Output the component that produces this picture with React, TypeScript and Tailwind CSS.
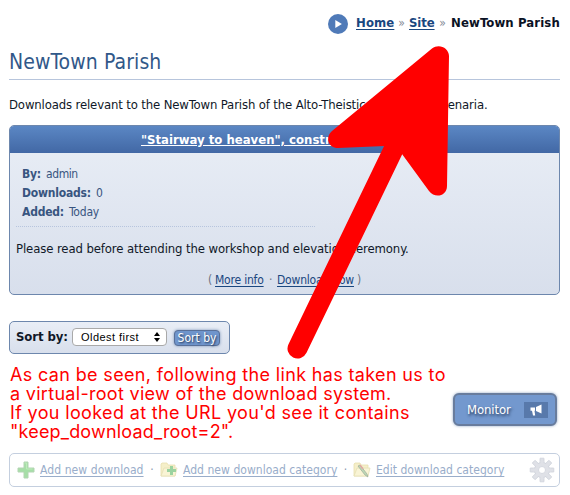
import React from "react";

const linkColor = "text-[#1a4780] underline underline-offset-2";

function Header() {
  return (
    <header className="mr-[10px] flex h-[46px] items-center justify-end text-[13px] font-bold text-[#0b1224]">
      <svg width="20" height="20" viewBox="0 0 20 20" className="mr-2 mt-[2px]">
        <circle cx="10" cy="10" r="10" fill="#4f7ab8" />
        <path d="M7.3 6v8l6.6-4z" fill="#fff" />
      </svg>
      <a className={`${linkColor} w-[38px] tracking-[0.1px]`}>Home</a>
      <span className="w-[15px] text-center text-[12px] font-normal text-[#858b98]">»</span>
      <a className={`${linkColor} w-[26px] tracking-[-0.1px]`}>Site</a>
      <span className="w-[15px] text-center text-[12px] font-normal text-[#858b98]">»</span>
      <span className="ml-px w-[109px] whitespace-nowrap tracking-[0.12px]">NewTown Parish</span>
    </header>
  );
}

function Entry() {
  return (
    <section className="h-[170px] w-[551px] overflow-hidden rounded-[5px] border border-[#6d87ad] bg-gradient-to-b from-[#e9eef6] to-[#d8dfec]">
      <h2 className="flex h-[27px] items-center bg-gradient-to-b from-[#5b87c4] to-[#4268a5] pl-[131px] text-[13px] font-bold text-white underline underline-offset-1">
        "Stairway to heaven", construction
      </h2>
      <dl className="ml-[6px] h-[74px] w-[299px] border-b border-dotted border-[#b7c5de] pl-[6px] pt-[12px] text-[12px] leading-[19px] tracking-[-0.2px] text-[#385580]">
        <div className="flex gap-[5px]"><dt className="font-bold">By:</dt><dd className="tracking-[-0.4px]">admin</dd></div>
        <div className="flex gap-[5px]"><dt className="font-bold">Downloads:</dt><dd>0</dd></div>
        <div className="flex gap-[5px]"><dt className="font-bold">Added:</dt><dd>Today</dd></div>
      </dl>
      <p className="ml-[6px] mt-[12px] whitespace-nowrap text-[13px] leading-[20px] tracking-[-0.11px]">Please read before attending the workshop and elevation ceremony.</p>
      <p className="ml-[198px] mt-[12px] flex whitespace-nowrap text-[12px] leading-[18px] tracking-[-0.2px] text-[#6c7484]">
        <span className="w-[7px]">(</span>
        <a className={`${linkColor} w-[49px]`}>More info</a>
        <span className="w-[13px] text-center">·</span>
        <a className={`${linkColor} w-[80px]`}>Download now</a>
        <span>)</span>
      </p>
    </section>
  );
}

function SortForm() {
  return (
    <form className="mt-[26px] flex h-[33px] w-[221px] items-center rounded-[5px] border border-[#6d87ad] bg-gradient-to-b from-[#e9eef6] to-[#d8dfec] pl-[6px]">
      <label className="mb-[2px] w-[56px] whitespace-nowrap text-[13px] font-bold tracking-[-0.1px]">Sort by:</label>
      <div className="mb-px flex h-[18px] w-[95px] items-center rounded-[4px] border border-[#a9a9a9] bg-white pl-2 font-['Liberation_Sans',sans-serif] text-[11px] tracking-[0.45px] text-black">
        <span className="w-[73px]">Oldest first</span>
        <svg width="6" height="10" viewBox="0 0 6 10"><path d="M3 0l3 4H0zM3 10L0 6h6z" /></svg>
      </div>
      <button type="button" className="ml-[7px] h-[16px] w-[46px] whitespace-nowrap rounded-[4px] border border-[#597098] bg-[#6f95cc] text-[12px] leading-[14px] tracking-[0px] text-white shadow-[0_0_3px_#7892b7] [text-shadow:1px_1px_2px_#182c4b]">Sort by</button>
    </form>
  );
}

function Folder({ edit = false }: { edit?: boolean }) {
  return (
    <svg width="18" height="16" viewBox="0 0 18 16">
      <path d="M1 14V2l1-1h5l1 2h7v11z" fill="#f5efc9" stroke="#e8dfae" strokeWidth=".8" />
      <path d="M1 14l3-8h13l-2 8z" fill="#f9f4d5" stroke="#e5dfb5" strokeWidth=".8" />
      {edit ? (
        <>
          <path d="M7 3l7 9 1 3-3-2-7-9z" fill="#bdd8b5" stroke="#9baa99" strokeWidth=".7" />
          <path d="M7 3l3 4" stroke="#e0a9a4" strokeWidth="1.5" />
        </>
      ) : (
        <path d="M10 4h3v3h3v3h-3v3h-3v-3H7V7h3z" fill="#9bd3a0" />
      )}
    </svg>
  );
}

function StaffBar() {
  const teeth = [0, 45, 90, 135, 180, 225, 270, 315];
  const link = "whitespace-nowrap text-[#99adca] underline underline-offset-2";
  return (
    <footer className="mt-[27px] flex h-[34px] w-[551px] items-center rounded-[5px] border border-[#c4cfdf] pl-[7px] text-[12px]">
      <svg width="18" height="18" viewBox="0 0 18 18">
        <path d="M7 1h4v6h6v4h-6v6H7v-6H1V7h6z" fill="#a6dfa7" stroke="#b3d4b3" strokeLinejoin="round" />
        <path d="M7.5 2h2v6h6" fill="none" stroke="#bdebba" />
      </svg>
      <a className={`${link} ml-[5px] w-[104px] tracking-[0.08px]`}>Add new download</a>
      <span className="w-[16px] text-center text-[#8998ad]">·</span>
      <Folder />
      <a className={`${link} ml-[5px] w-[155px] tracking-[0.04px]`}>Add new download category</a>
      <span className="w-[15px] text-center text-[#8998ad]">·</span>
      <Folder edit />
      <a className={`${link} ml-[5px] w-[128px] tracking-[0.03px]`}>Edit download category</a>
      <svg className="ml-[25px]" width="26" height="26" viewBox="0 0 26 26">
        <g fill="#dfe1e7" stroke="#ced2da" strokeWidth=".8">
          {teeth.map((angle) => <rect key={angle} x="11" y="1.2" width="4" height="6" rx=".3" transform={`rotate(${angle} 13 13)`} />)}
          <circle cx="13" cy="13" r="7.6" />
        </g>
        <g fill="#dfe1e7">
          {teeth.map((angle) => <rect key={angle} x="11.5" y="4" width="3" height="4" transform={`rotate(${angle} 13 13)`} />)}
        </g>
        <circle cx="13" cy="13" r="3.5" fill="#fff" stroke="#ced2da" strokeWidth=".8" />
      </svg>
    </footer>
  );
}

export default function App() {
  return (
    <main className="relative h-[495px] w-[570px] overflow-hidden bg-white pl-[9px] font-['DejaVu_Sans_Condensed','DejaVu_Sans',sans-serif] text-[#101828]">
      <Header />
      <h1 className="h-[34px] w-[551px] border-b border-[#b7c5dc] text-[21px] leading-[32px] tracking-[0.1px] text-[#315889]">NewTown Parish</h1>
      <p className="h-[45px] whitespace-nowrap pt-[15px] text-[13px] leading-[20px] tracking-[-0.14px]">Downloads relevant to the NewTown Parish of the Alto-Theistic Church of Ascenaria.</p>
      <Entry />
      <SortForm />
      <div className="flex h-[72px] items-end justify-between">
        <p className="mb-[-15px] mt-auto h-[76px] whitespace-nowrap pl-px font-['Inter',sans-serif] text-[18px] leading-[19px] text-[#ff0000]">
          <span className="tracking-[0.35px]">As can be seen, following the link has taken us to</span><br />
          <span className="tracking-[0.3px]">a virtual-root view of the download system.</span><br />
          <span className="tracking-[0.35px]">If you looked at the URL you'd see it contains</span><br />
          <span className="tracking-[0.18px]">"keep_download_root=2".</span>
        </p>
        <button type="button" className="mr-[13px] flex h-[33px] w-[104px] shrink-0 items-center rounded-[6px] border-2 border-[#687c9d] bg-[#7398ce] pl-[12px] text-[13px] tracking-[-0.1px] text-white shadow-[0_0_3px_#8fa5c3] [text-shadow:1px_2px_3px_#182c4b]">
          <span className="w-[57px] text-left">Monitor</span>
          <span className="flex h-[16px] w-[24px] items-center justify-center bg-[#5879ab]">
            <svg width="12" height="12" viewBox="0 0 12 12" fill="#fff">
              <path d="M11.5.5v9L6 7V3z" />
              <path d="M.5 3.5H5v3.3h-.5l.7 4.7H3L2 6.8H.5z" />
            </svg>
          </span>
        </button>
      </div>
      <StaffBar />
      <svg className="pointer-events-none absolute inset-0" width="570" height="495" viewBox="0 0 570 495">
        <path d="M297.5 348.5L399 138" stroke="#f00" strokeWidth="20" strokeLinecap="round" />
        <path d="M432 48.5C439 43 449 48 449 56L447 186C447 196 435 199 429 191L402 154L385 146L338 148C328 148 325 137 332 131Z" fill="#f00" />
      </svg>
    </main>
  );
}
